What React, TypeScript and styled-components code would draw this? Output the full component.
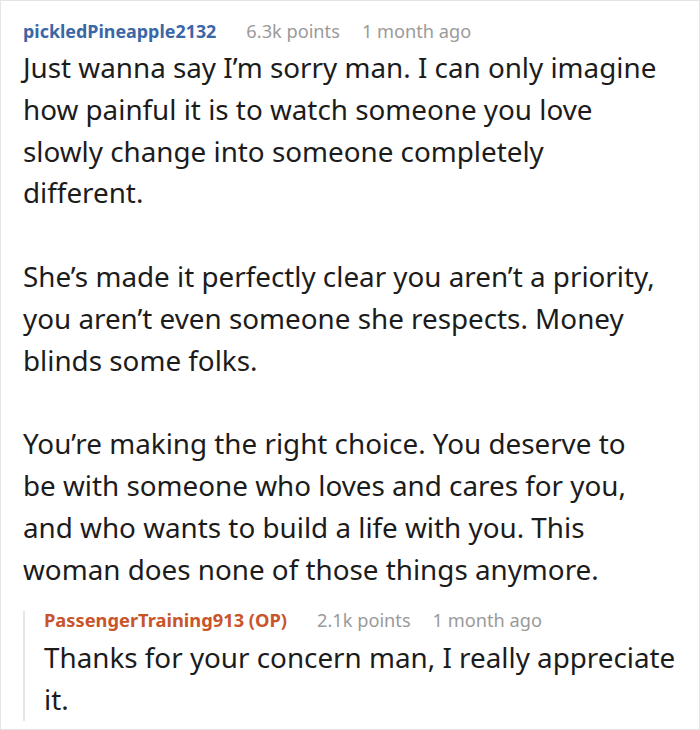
import styled, { createGlobalStyle } from 'styled-components';

const GlobalStyle = createGlobalStyle`
  html, body {
    margin: 0;
    padding: 0;
    background: #ffffff;
  }
`;

const S = {
  Card: styled.div`
    box-sizing: border-box;
    width: 700px;
    height: 730px;
    padding: 19px 4px 0 22px;
    border: 1px solid #e4e4e4;
    background: #ffffff;
    font-family: 'Noto Sans', 'Open Sans', sans-serif;
    color: #1c1c1c;
    overflow: hidden;
  `,

  Meta: styled.div<{ $tight?: boolean }>`
    display: flex;
    align-items: baseline;
    gap: 22px;
    font-size: 18.2px;
    line-height: ${({ $tight }) => ($tight ? '18px' : '22px')};
    white-space: nowrap;
  `,

  Author: styled.span<{ $op?: boolean }>`
    margin-right: 8px;
    font-size: ${({ $op }) => ($op ? '18.3px' : '17.9px')};
    font-weight: 700;
    color: ${({ $op }) => ($op ? '#c8552b' : '#3b67a7')};
  `,

  Info: styled.span`
    color: #9a9a9a;
  `,

  Body: styled.div<{ $reply?: boolean }>`
    margin-top: ${({ $reply }) => ($reply ? '8px' : '5px')};
    font-size: 27.8px;
    line-height: 41.8px;
    white-space: nowrap;
  `,

  Paragraph: styled.p`
    margin: 0 0 41.8px;

    &:last-child {
      margin-bottom: 0;
    }
  `,

  Reply: styled.div`
    margin-top: 21px;
    border-left: 2px solid #e6e6e6;
    padding-left: 19px;
  `,

  ReplyText: styled.p`
    margin: 0 0 -10px;
  `,
};

function App() {
  return (
    <>
      <GlobalStyle />
      <S.Card>
        <S.Meta>
          <S.Author>pickledPineapple2132</S.Author>
          <S.Info>6.3k points</S.Info>
          <S.Info>1 month ago</S.Info>
        </S.Meta>
        <S.Body>
          <S.Paragraph>
            Just wanna say I’m sorry man. I can only imagine
            <br />
            how painful it is to watch someone you love
            <br />
            slowly change into someone completely
            <br />
            different.
          </S.Paragraph>
          <S.Paragraph>
            She’s made it perfectly clear you aren’t a priority,
            <br />
            you aren’t even someone she respects. Money
            <br />
            blinds some folks.
          </S.Paragraph>
          <S.Paragraph>
            You’re making the right choice. You deserve to
            <br />
            be with someone who loves and cares for you,
            <br />
            and who wants to build a life with you. This
            <br />
            woman does none of those things anymore.
          </S.Paragraph>
        </S.Body>
        <S.Reply>
          <S.Meta $tight>
            <S.Author $op>PassengerTraining913 (OP)</S.Author>
            <S.Info>2.1k points</S.Info>
            <S.Info>1 month ago</S.Info>
          </S.Meta>
          <S.Body $reply>
            <S.ReplyText>
              Thanks for your concern man, I really appreciate
              <br />
              it.
            </S.ReplyText>
          </S.Body>
        </S.Reply>
      </S.Card>
    </>
  );
}

export default App;
